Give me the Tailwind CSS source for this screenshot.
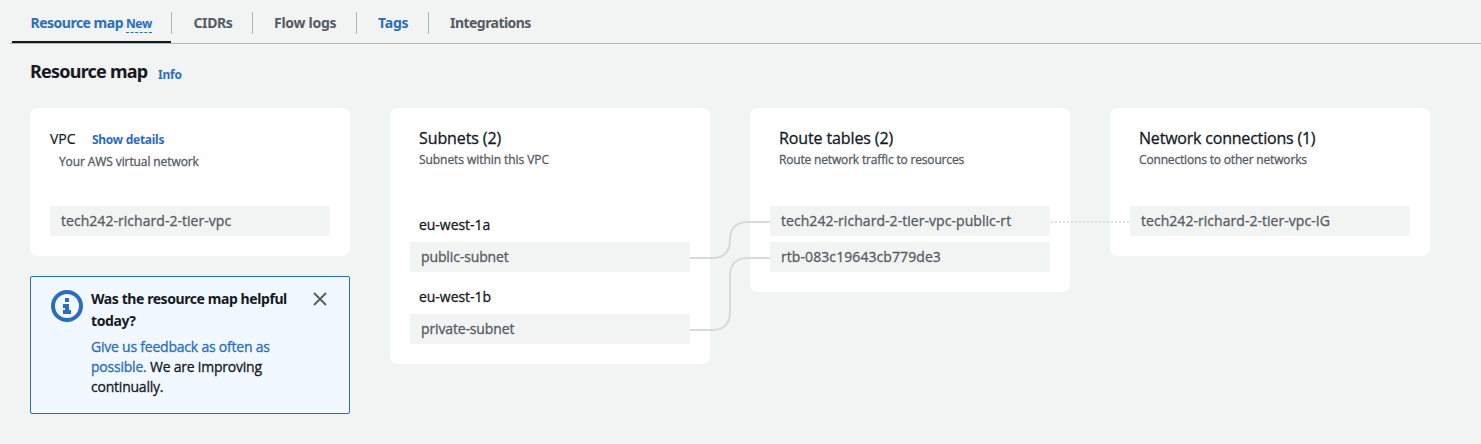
<!DOCTYPE html>
<html lang="en">
<head>
<meta charset="utf-8">
<title>Resource map</title>
<script src="https://cdn.jsdelivr.net/npm/@tailwindcss/browser@4"></script>
</head>
<body class="relative h-[444px] overflow-hidden bg-[#f2f3f3] font-['Open_Sans','Noto_Sans',sans-serif] text-sm text-[#16191f]">
  <nav class="ml-2.5 flex h-11 items-start border-b border-[#aab7b8] pl-0.5 font-['Noto_Sans',sans-serif] leading-5 font-bold whitespace-nowrap text-[#545b64]">
    <a class="flex h-[43px] w-[159px] items-baseline border-b-2 border-[#16191f] pt-[13px] pl-[18.5px] text-[#2a6ebb]"><span class="w-[95.5px] tracking-[-0.5px]">Resource map</span><span class="border-b border-dashed border-[#2a6ebb] text-xs leading-[17px] tracking-[-0.4px]">New</span></a>
    <a class="mt-3 flex h-[22px] w-[82px] border-l border-[#aab7b8] pt-px pl-[21.5px] tracking-[-0.4px]">CIDRs</a>
    <a class="mt-3 -ml-px flex h-[22px] w-[104px] border-l border-[#aab7b8] pt-px pl-[21px] tracking-[-0.27px]">Flow logs</a>
    <a class="mt-3 flex h-[22px] w-[72px] border-l border-[#aab7b8] pt-px pl-[21px] tracking-[-0.2px] text-[#2a6ebb]">Tags</a>
    <a class="mt-3 flex h-[22px] border-l border-[#aab7b8] pt-px pl-[21px] tracking-[-0.54px]">Integrations</a>
  </nav>

  <header class="flex items-baseline pt-[15px] pl-[30px] font-['Noto_Sans',sans-serif] font-bold">
    <h1 class="w-[128px] text-lg leading-6 tracking-[-0.78px]">Resource map</h1>
    <a class="relative top-px text-xs leading-4 tracking-[-0.2px] text-[#2a6ebb]">Info</a>
  </header>

  <main class="mt-[25px] ml-[30px] flex items-start gap-10 whitespace-nowrap">
    <div class="flex w-80 flex-col gap-5">
      <section class="h-[148px] rounded-lg bg-white px-5 pt-[21px]">
        <div class="flex items-baseline leading-5"><h2 class="w-[42px] [-webkit-text-stroke:0.2px]">VPC</h2><a class="font-['Noto_Sans',sans-serif] text-xs leading-4 font-bold tracking-[-0.27px] text-[#2a6ebb]">Show details</a></div>
        <p class="mt-[5px] pl-[9px] text-xs leading-4 tracking-[-0.1px] text-[#545b64] [-webkit-text-stroke:0.3px]">Your AWS virtual network</p>
        <div class="mt-9 h-[30px] rounded-xs bg-[#f2f3f3] pl-[11px] leading-[30px] tracking-[0.04px] text-[#545b64] [-webkit-text-stroke:0.3px]">tech242-richard-2-tier-vpc</div>
      </section>
      <aside class="flex h-[138px] rounded-xs border border-[#2a6ebb] bg-[#f1f8ff] pl-5">
        <svg class="mt-[13px] size-8 shrink-0" viewBox="0 0 32 32" fill="none"><circle cx="16" cy="16" r="14" stroke="#2a6ebb" stroke-width="4"/><path fill="#2a6ebb" d="M14 8h4v4h-4zM12 14h6v6h2v4h-8v-4h2v-2h-2z"/></svg>
        <div class="ml-2 w-[219px] pt-[11px]">
          <h3 class="font-['Noto_Sans',sans-serif] leading-[22px] font-bold tracking-[-0.42px]">Was the resource map helpful<br>today?</h3>
          <p class="mt-[5px] leading-5 tracking-[-0.22px] [-webkit-text-stroke:0.3px]"><a class="text-[#2a6ebb]">Give us feedback as often as<br>possible.</a> We are improving<br>continually.</p>
        </div>
        <svg class="mt-[15px] ml-[3px] size-3.5" viewBox="0 0 14 14" stroke="#545b64" stroke-width="1.8"><path d="M1 1l12 12M13 1L1 13"/></svg>
      </aside>
    </div>

    <section class="h-64 w-80 rounded-lg bg-white px-5 pt-5">
      <h2 class="pl-[9px] text-base leading-5 tracking-[-0.1px] [-webkit-text-stroke:0.3px]">Subnets (2)</h2>
      <p class="mt-1 pl-[9px] text-xs leading-4 tracking-[-0.06px] text-[#545b64] [-webkit-text-stroke:0.3px]">Subnets within this VPC</p>
      <h3 class="mt-[47px] pl-[9px] leading-5 tracking-[-0.04px] [-webkit-text-stroke:0.3px]">eu-west-1a</h3>
      <div class="mt-[7px] h-[30px] rounded-xs bg-[#f2f3f3] pl-[11px] leading-[30px] tracking-[-0.12px] text-[#545b64] [-webkit-text-stroke:0.3px]">public-subnet</div>
      <h3 class="mt-[15px] pl-[9px] leading-5 tracking-[-0.04px] [-webkit-text-stroke:0.3px]">eu-west-1b</h3>
      <div class="mt-[7px] h-[30px] rounded-xs bg-[#f2f3f3] pl-[11px] leading-[30px] tracking-[-0.14px] text-[#545b64] [-webkit-text-stroke:0.3px]">private-subnet</div>
    </section>

    <section class="h-[184px] w-80 rounded-lg bg-white px-5 pt-5">
      <h2 class="pl-[9px] text-base leading-5 tracking-[-0.12px] [-webkit-text-stroke:0.3px]">Route tables (2)</h2>
      <p class="mt-1 pl-[9px] text-xs leading-4 tracking-[-0.17px] text-[#545b64] [-webkit-text-stroke:0.3px]">Route network traffic to resources</p>
      <div class="mt-[38px] h-[30px] rounded-xs bg-[#f2f3f3] pl-[11px] leading-[30px] tracking-[0.05px] text-[#545b64] [-webkit-text-stroke:0.3px]">tech242-richard-2-tier-vpc-public-rt</div>
      <div class="mt-1.5 h-[30px] rounded-xs bg-[#f2f3f3] pl-[11px] leading-[30px] tracking-[0.08px] text-[#545b64] [-webkit-text-stroke:0.3px]">rtb-083c19643cb779de3</div>
    </section>

    <section class="h-[148px] w-80 rounded-lg bg-white px-5 pt-5">
      <h2 class="pl-[9px] text-base leading-5 tracking-[-0.2px] [-webkit-text-stroke:0.3px]">Network connections (1)</h2>
      <p class="mt-1 pl-[9px] text-xs leading-4 tracking-[-0.17px] text-[#545b64] [-webkit-text-stroke:0.3px]">Connections to other networks</p>
      <div class="mt-[38px] h-[30px] rounded-xs bg-[#f2f3f3] pl-[11px] leading-[30px] tracking-[0.04px] text-[#545b64] [-webkit-text-stroke:0.3px]">tech242-richard-2-tier-vpc-IG</div>
    </section>
  </main>

  <!-- Connectors between subnets, route tables and the gateway -->
  <svg class="pointer-events-none absolute top-0 left-0 h-[444px] w-[1481px]" viewBox="0 0 1481 444" fill="none" stroke="#d5dbdb" stroke-width="2">
    <path d="M690 258H712Q730 258 730 240Q730 222 748 222H770"/>
    <path d="M690 330H712Q730 330 730 312V276Q730 258 748 258H770"/>
    <path d="M1051 222H1130" stroke="#e0e0e0" stroke-dasharray="2 2"/>
  </svg>
</body>
</html>
